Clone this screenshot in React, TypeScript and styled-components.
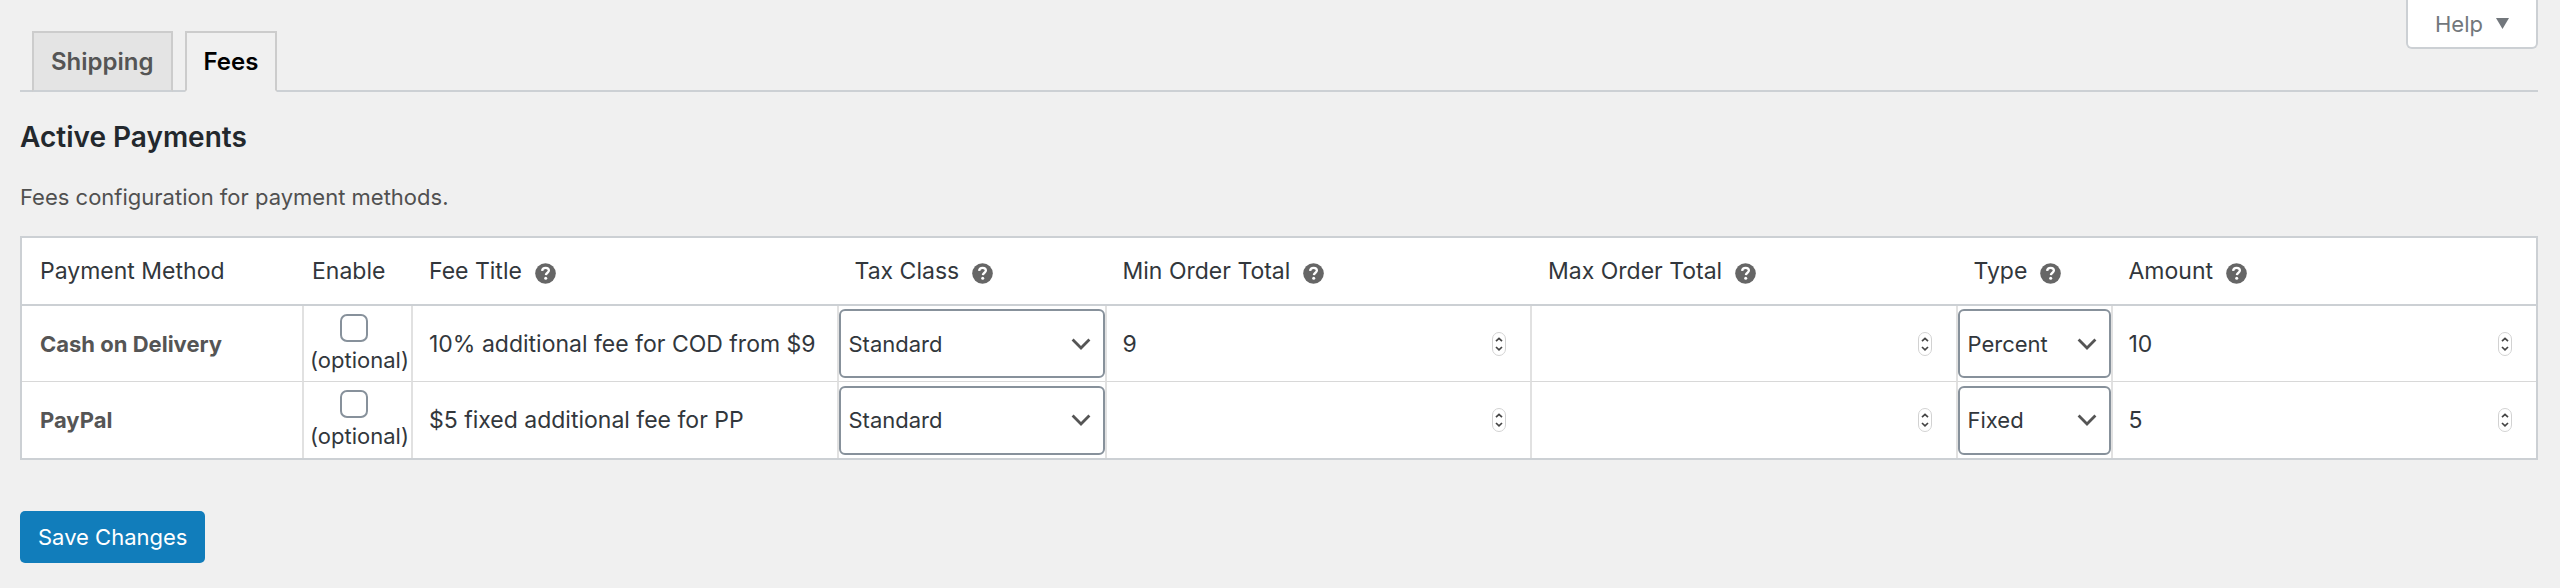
import React, { useState } from "react";
import styled, { createGlobalStyle, css } from "styled-components";

const GlobalStyle = createGlobalStyle`
  *, *::before, *::after { box-sizing: border-box; }
  body {
    margin: 0;
    background: #f0f0f0;
    color: #32373c;
    font-family: Inter, "Liberation Sans", sans-serif;
    font-size: 22px;
    line-height: 32px;
  }
`;

const Page = styled.div`
  padding: 0 22px 24px 20px;
`;

const TopBar = styled.header`
  display: flex;
  justify-content: space-between;
  align-items: flex-start;
  border-bottom: 2px solid #ccd0d4;
`;

const Tabs = styled.nav`
  display: flex;
  gap: 12px;
  padding: 31px 0 0 12px;
  margin-bottom: -2px;
`;

const Tab = styled.a<{ $active?: boolean }>`
  border: 2px solid #ccc;
  border-bottom-color: #ccd0d4;
  background: #e4e4e4;
  color: #555;
  padding: 13px 17px 12px;
  font-size: 24px;
  font-weight: 600;
  text-decoration: none;
  ${(p) =>
    p.$active &&
    css`
      background: #f0f0f0;
      border-bottom-color: #f0f0f0;
      color: #000;
    `}
`;

const HelpButton = styled.button`
  display: flex;
  align-items: center;
  gap: 13px;
  height: 49px;
  padding: 0 27px;
  border: 2px solid #ccd0d4;
  border-top: 0;
  border-radius: 0 0 6px 6px;
  background: #fff;
  color: #72777c;
  font: inherit;
`;

const Heading = styled.h2`
  margin: 27px 0 0;
  font-size: 28px;
  line-height: 36px;
  font-weight: 600;
  color: #23282d;
`;

const Description = styled.p`
  margin: 26px 0 23px;
  color: #505050;
`;

const Table = styled.table`
  width: 100%;
  table-layout: fixed;
  border-collapse: separate;
  border-spacing: 0;
  border: 2px solid #ccd0d4;
  background: #fff;
`;

const Col = styled.col<{ $width?: number }>`
  width: ${(p) => (p.$width ? `${p.$width}px` : "auto")};
`;

const HeadCell = styled.th<{ $tight?: boolean }>`
  height: 68px;
  padding: 0 0 0 ${(p) => (p.$tight ? 10 : 18)}px;
  border-bottom: 2px solid #ccd0d4;
  font-size: 23px;
  font-weight: 400;
  text-align: left;
  white-space: nowrap;
`;

const HeadLabel = styled.span`
  display: flex;
  align-items: center;
  gap: 13px;
`;

const TipIcon = styled.svg`
  width: 21px;
  height: 21px;
  margin-top: 4px;
  flex: none;
`;

const Row = styled.tr`
  &:not(:last-child) > * {
    border-bottom: 1px solid #d8d8d8;
  }
`;

const NameCell = styled.th`
  height: 76px;
  padding: 0 18px;
  text-align: left;
  font-weight: 700;
  color: #555;
`;

const Cell = styled.td`
  height: 76px;
  padding: 0;
  border-left: 2px solid #e1e1e1;
`;

const EnableLabel = styled.label`
  display: flex;
  flex-direction: column;
  align-items: center;
  gap: 2px;
  padding: 2px 0 0 4px;
`;

const Checkbox = styled.input`
  appearance: none;
  width: 28px;
  height: 28px;
  margin: 0 12px 0 0;
  border: 2px solid #87919b;
  border-radius: 7px;
  background: #fff;
`;

const Field = styled.div`
  display: flex;
  align-items: center;
  padding: 0 24px 0 16px;
`;

const TextInput = styled.input`
  flex: 1;
  min-width: 0;
  width: 100%;
  height: 48px;
  padding: 0;
  border: 0;
  background: transparent;
  color: inherit;
  font: inherit;
  font-size: 23px;
  appearance: textfield;
  &::-webkit-inner-spin-button,
  &::-webkit-outer-spin-button {
    appearance: none;
    margin: 0;
  }
`;

const TitleField = styled(Field)`
  padding-right: 16px;
`;

const Stepper = styled.svg`
  width: 14px;
  height: 24px;
  flex: none;
`;

const SelectBox = styled.div`
  display: grid;
  align-items: center;
  > * {
    grid-area: 1 / 1;
  }
`;

const Select = styled.select`
  appearance: none;
  width: 100%;
  height: 69px;
  padding: 0 44px 0 8px;
  border: 2px solid #87919b;
  border-radius: 6px;
  background: #fff;
  color: inherit;
  font: inherit;
`;

const Chevron = styled.svg`
  width: 20px;
  height: 12px;
  justify-self: end;
  margin-right: 14px;
  pointer-events: none;
`;

const SaveButton = styled.button`
  margin-top: 51px;
  height: 52px;
  padding: 0 18px;
  border: 0;
  border-radius: 5px;
  background: #117dbb;
  color: #fff;
  font: inherit;
`;

function Tip() {
  return (
    <TipIcon viewBox="0 0 21 21" aria-hidden="true">
      <circle cx="10.5" cy="10.5" r="10.3" fill="#666" />
      <path
        d="M7.1 7.9c.2-2 1.5-3 3.5-3s3.3 1 3.3 2.7c0 2.2-2.9 2.1-3 4.5"
        fill="none"
        stroke="#fff"
        strokeWidth="2.3"
      />
      <circle cx="10.7" cy="15.2" r="1.5" fill="#fff" />
    </TipIcon>
  );
}

function NumberField({ label, initial }: { label: string; initial: string }) {
  const [value, setValue] = useState(initial);
  return (
    <Field>
      <TextInput type="number" aria-label={label} value={value} onChange={(e) => setValue(e.target.value)} />
      <Stepper viewBox="0 0 14 24" aria-hidden="true">
        <rect x="0.5" y="0.5" width="13" height="23" rx="6.5" fill="#fff" stroke="#d2d2d2" />
        <path d="M4 9.2 7 6.4l3 2.8M4 15l3 2.8 3-2.8" fill="none" stroke="#444" strokeWidth="1.7" />
      </Stepper>
    </Field>
  );
}

function SelectField({ label, initial, options }: { label: string; initial: string; options: string[] }) {
  return (
    <SelectBox>
      <Select aria-label={label} defaultValue={initial}>
        {options.map((o) => (
          <option key={o}>{o}</option>
        ))}
      </Select>
      <Chevron viewBox="0 0 20 12" aria-hidden="true">
        <path d="M1.6 1.6 10 10l8.4-8.4" fill="none" stroke="#555" strokeWidth="2.8" />
      </Chevron>
    </SelectBox>
  );
}

const columns = [
  { label: "Payment Method", width: 280 },
  { label: "Enable", width: 109, tight: true },
  { label: "Fee Title", tip: true },
  { label: "Tax Class", width: 268, tip: true },
  { label: "Min Order Total", tip: true },
  { label: "Max Order Total", tip: true },
  { label: "Type", width: 155, tip: true },
  { label: "Amount", tip: true },
];

const methods = [
  { name: "Cash on Delivery", title: "10% additional fee for COD from $9", min: "9", max: "", type: "Percent", amount: "10" },
  { name: "PayPal", title: "$5 fixed additional fee for PP", min: "", max: "", type: "Fixed", amount: "5" },
];

export default function App() {
  return (
    <>
      <GlobalStyle />
      <Page>
        <TopBar>
          <Tabs>
            <Tab href="#shipping">Shipping</Tab>
            <Tab href="#fees" $active aria-current="page">
              Fees
            </Tab>
          </Tabs>
          <HelpButton type="button">
            Help
            <svg width="13" height="11" viewBox="0 0 13 11" aria-hidden="true">
              <path d="M0 0h13L6.5 11z" fill="#72777c" />
            </svg>
          </HelpButton>
        </TopBar>
        <Heading>Active Payments</Heading>
        <Description>Fees configuration for payment methods.</Description>
        <Table>
          <colgroup>
            {columns.map((c) => (
              <Col key={c.label} $width={c.width} />
            ))}
          </colgroup>
          <thead>
            <tr>
              {columns.map((c) => (
                <HeadCell key={c.label} scope="col" $tight={c.tight}>
                  <HeadLabel>
                    {c.label}
                    {c.tip && <Tip />}
                  </HeadLabel>
                </HeadCell>
              ))}
            </tr>
          </thead>
          <tbody>
            {methods.map((m) => (
              <Row key={m.name}>
                <NameCell scope="row">{m.name}</NameCell>
                <Cell>
                  <EnableLabel>
                    <Checkbox type="checkbox" />
                    (optional)
                  </EnableLabel>
                </Cell>
                <Cell>
                  <TitleField>
                    <TextInput type="text" aria-label={`${m.name} fee title`} defaultValue={m.title} />
                  </TitleField>
                </Cell>
                <Cell>
                  <SelectField
                    label={`${m.name} tax class`}
                    initial="Standard"
                    options={["Standard", "Reduced rate", "Zero rate"]}
                  />
                </Cell>
                <Cell>
                  <NumberField label={`${m.name} min order total`} initial={m.min} />
                </Cell>
                <Cell>
                  <NumberField label={`${m.name} max order total`} initial={m.max} />
                </Cell>
                <Cell>
                  <SelectField label={`${m.name} type`} initial={m.type} options={["Fixed", "Percent"]} />
                </Cell>
                <Cell>
                  <NumberField label={`${m.name} amount`} initial={m.amount} />
                </Cell>
              </Row>
            ))}
          </tbody>
        </Table>
        <SaveButton type="submit">Save Changes</SaveButton>
      </Page>
    </>
  );
}
